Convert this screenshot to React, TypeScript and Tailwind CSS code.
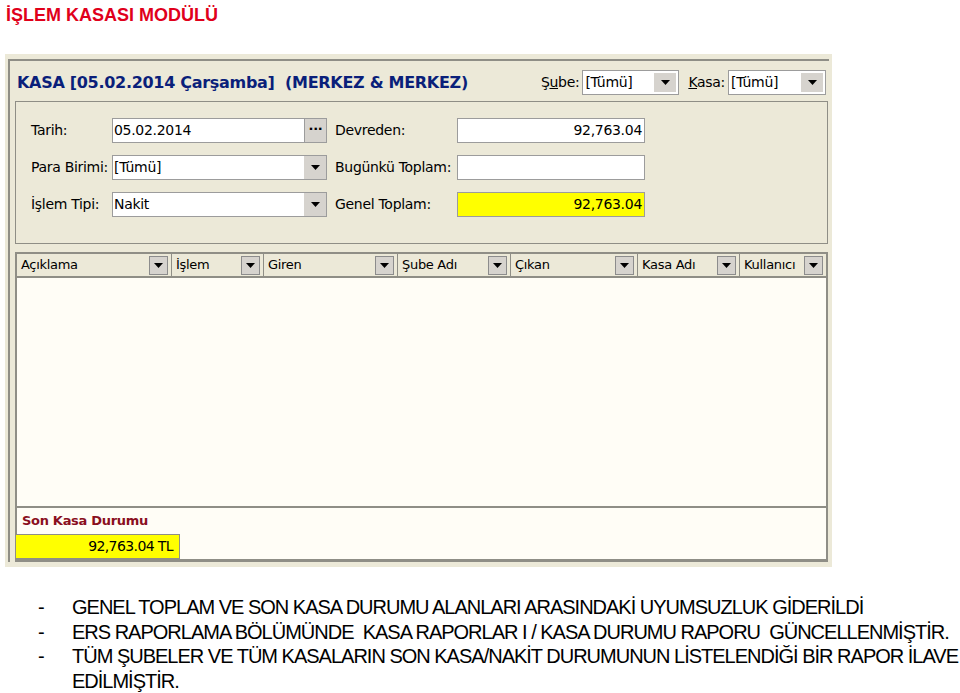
import React from "react";

const tahoma = { fontFamily: '"DejaVu Sans", Verdana, sans-serif' };

function Arrow() {
  return (
    <svg width="9" height="5" viewBox="0 0 9 5">
      <path d="M0 0h9L4.5 5z" fill="#000" />
    </svg>
  );
}

function DropBtn({ small }: { small?: boolean }) {
  return (
    <div
      className={`flex items-center justify-center bg-[#d6d3ce] ${
        small ? "w-[19px] h-[19px] border border-[#8c8c8c]" : "w-[22px] h-full"
      }`}
    >
      <Arrow />
    </div>
  );
}

function Field({
  value,
  kind,
  width,
}: {
  value: string;
  kind: "dots" | "drop";
  width: string;
}) {
  return (
    <div className={`flex h-[25px] ${width} border border-[#9c9c9c] bg-white`}>
      <div className="flex-1 px-[1px] flex items-center text-[14px] tracking-[-0.3px] text-black">{value}</div>
      {kind === "drop" ? (
        <DropBtn />
      ) : (
        <div className="w-[22px] h-full bg-[#d6d3ce] border-l border-[#9c9c9c] flex items-center justify-center text-[13px] font-bold leading-none pb-[4px]">
          ···
        </div>
      )}
    </div>
  );
}

function NumBox({ value, yellow }: { value: string; yellow?: boolean }) {
  return (
    <div
      className={`h-[25px] w-[188px] border border-[#9c9c9c] flex items-center justify-end pr-[2px] text-[14px] tracking-[-0.3px] ${
        yellow ? "bg-[#ffff00]" : "bg-white"
      }`}
    >
      {value}
    </div>
  );
}

const cols = [
  { name: "Açıklama", w: "w-[154px]" },
  { name: "İşlem", w: "w-[92px]" },
  { name: "Giren", w: "w-[134px]" },
  { name: "Şube Adı", w: "w-[113px]" },
  { name: "Çıkan", w: "w-[127px]" },
  { name: "Kasa Adı", w: "w-[102px]" },
  { name: "Kullanıcı", w: "flex-1" },
];

export default function App() {
  return (
    <div className="w-[960px] h-[693px] bg-white overflow-hidden">
      <h1
        className="pl-[6px] pt-[4px] text-[18px] leading-[22px] font-bold text-[#e0001b]"
        style={{ fontFamily: '"Liberation Sans", Arial, sans-serif' }}
      >
        İŞLEM KASASI MODÜLÜ
      </h1>

      <div className="ml-[5px] mt-[28px] w-[827px] h-[513px] bg-[#ece9d8] pt-[5px] pl-[3px] pr-[3px] pb-[5px]" style={tahoma}>
        <div className="h-full border-l-2 border-t-2 border-[#8f8e86] flex flex-col pl-[5px] pr-[1px]">
          <div className="h-[40px] flex items-center justify-between">
            <div className="pl-[2px] pt-[3px] text-[16px] font-bold text-[#0a1f7a] tracking-[-0.3px] whitespace-pre">
              KASA [05.02.2014 Çarşamba]  (MERKEZ &amp; MERKEZ)
            </div>
            <div className="flex items-center gap-[3px] pt-[2px] pr-[2px] text-[14px] tracking-[-0.3px]">
              <span>
                Ş<span className="underline">u</span>be:
              </span>
              <div className="flex w-[97px] h-[25px] border border-[#9c9c9c] bg-white p-[2px]">
                <span className="flex-1 leading-[19px]">[Tümü]</span>
                <DropBtn />
              </div>
              <span className="ml-[6px]">
                <span className="underline">K</span>asa:
              </span>
              <div className="flex w-[98px] h-[25px] border border-[#9c9c9c] bg-white p-[2px]">
                <span className="flex-1 leading-[19px]">[Tümü]</span>
                <DropBtn />
              </div>
            </div>
          </div>

          <div className="h-[143px] border border-[#8f8e86] flex flex-col gap-[12px] pt-[16px] text-[14px] tracking-[-0.3px]">
            {[
              { l: "Tarih:", v: "05.02.2014", k: "dots" as const, r: "Devreden:", n: "92,763.04", y: false },
              { l: "Para Birimi:", v: "[Tümü]", k: "drop" as const, r: "Bugünkü Toplam:", n: "", y: false },
              { l: "İşlem Tipi:", v: "Nakit", k: "drop" as const, r: "Genel Toplam:", n: "92,763.04", y: true },
            ].map((row) => (
              <div key={row.l} className="flex items-center">
                <div className="w-[96px] pl-[15px]">{row.l}</div>
                <Field value={row.v} kind={row.k} width="w-[215px]" />
                <div className="w-[130px] pl-[8px]">{row.r}</div>
                <NumBox value={row.n} yellow={row.y} />
              </div>
            ))}
          </div>

          <div className="mt-[8px] flex-1 border-2 border-[#8f8e86] border-b-[3px] flex flex-col bg-[#fffdf6]">
            <div className="h-[24px] bg-[#ece9d8] border-b-2 border-[#8f8e86] flex items-center text-[13px] tracking-[-0.3px]">
              {cols.map((c, i) => (
                <div key={c.name} className={`${c.w} h-full flex items-center ${i > 0 ? "border-l border-[#8f8e86]" : ""} pl-[4px] pr-[3px]`}>
                  <span className="flex-1">{c.name}</span>
                  <DropBtn small />
                </div>
              ))}
            </div>
            <div className="flex-1" />
            <div className="h-[53px] border-t-2 border-[#8f8e86] flex flex-col">
              <div className="h-[26px] pl-[5px] flex items-center text-[13px] font-bold text-[#8a0f1e] tracking-[-0.3px]">
                Son Kasa Durumu
              </div>
              <div className="-ml-[2px] w-[165px] h-[25px] bg-[#ffff00] border border-[#8f8e86] flex items-center justify-end pr-[6px] text-[14px] tracking-[-0.6px]">
                92,763.04 TL
              </div>
            </div>
          </div>
        </div>
      </div>

      <ul
        className="mt-[28px] text-[20px] leading-[24.7px] text-black tracking-[-1px]"
        style={{ fontFamily: '"Liberation Sans", Arial, sans-serif' }}
      >
        {[
          "GENEL TOPLAM VE SON KASA DURUMU ALANLARI ARASINDAKİ UYUMSUZLUK GİDERİLDİ",
          "ERS RAPORLAMA BÖLÜMÜNDE  KASA RAPORLAR I / KASA DURUMU RAPORU  GÜNCELLENMİŞTİR.",
          "TÜM ŞUBELER VE TÜM KASALARIN SON KASA/NAKİT DURUMUNUN LİSTELENDİĞİ BİR RAPOR İLAVE EDİLMİŞTİR.",
        ].map((t) => (
          <li key={t} className="flex pr-[2px]">
            <span className="w-[72px] pl-[38px] shrink-0">-</span>
            <span className="whitespace-pre-wrap">{t}</span>
          </li>
        ))}
      </ul>
    </div>
  );
}
